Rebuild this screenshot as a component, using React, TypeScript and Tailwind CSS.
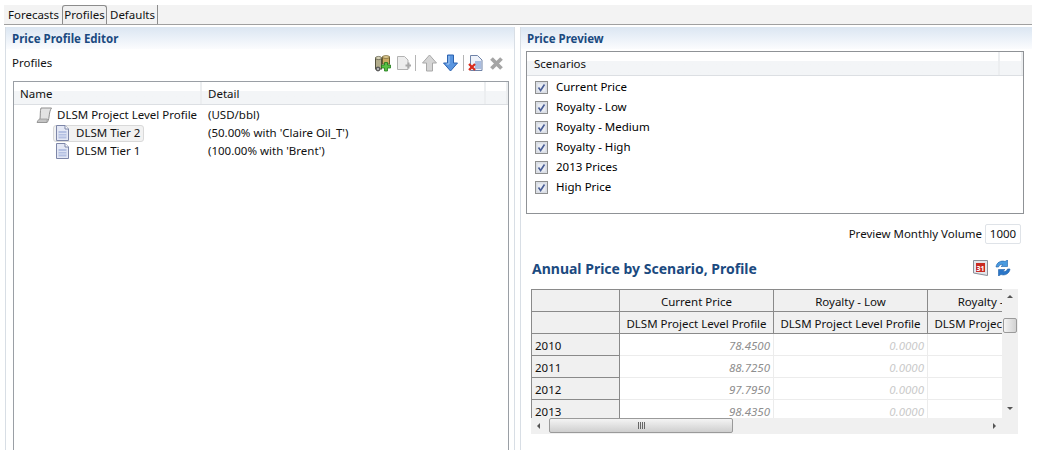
import React from "react";

const font = { fontFamily: '"Noto Sans", "Open Sans", sans-serif' };

function CheckRow({ label }: { label: string }) {
  return (
    <div className="flex h-5 items-center pl-2">
      <svg width="13" height="13" viewBox="0 0 13 13" className="shrink-0">
        <rect x="0.5" y="0.5" width="12" height="12" fill="#dfe3ea" stroke="#8e8f8f" />
        <rect x="2" y="2" width="9" height="9" fill="#e9ecf2" stroke="#c6cbd4" strokeWidth="0.5" />
        <path d="M3.5 6.5 L5.6 9.5 L9.5 3.5" fill="none" stroke="#4a5f97" strokeWidth="1.6" />
      </svg>
      <span className="ml-[8px] text-black">{label}</span>
    </div>
  );
}

function DocIcon() {
  return (
    <svg width="15" height="16" viewBox="0 0 15 16" className="shrink-0">
      <path d="M1.5 0.5 H10 L13.5 4 V15.5 H1.5 Z" fill="#e4e8f5" stroke="#7d86a8" />
      <path d="M10 0.5 V4 H13.5" fill="#fff" stroke="#7d86a8" />
      <rect x="3.5" y="6" width="8" height="7.5" fill="#b4c0e2" />
      <path d="M3.5 8.5 H11.5 M3.5 11 H11.5" stroke="#eef1fa" strokeWidth="0.7" />
    </svg>
  );
}

function ScrollIcon() {
  return (
    <svg width="17" height="17" viewBox="0 0 17 17" className="shrink-0">
      <path d="M5 1 H15.5 C14 3 13.5 6 13 10 C12.8 12 12 14.5 11 15.5 H1 C2.5 14.5 3 13 4 12 C4.5 8 4 4 5 1 Z" fill="#e3e3e3" stroke="#8f8f8f" />
      <path d="M1 15.5 C2 12.5 3 12 4.5 12 H11.5 C11 13 11 14.5 11 15.5 Z" fill="#c4c4c4" stroke="#8f8f8f" strokeWidth="0.7" />
    </svg>
  );
}

function Toolbar() {
  return (
    <div className="flex items-center">
      <svg width="16" height="17" viewBox="0 0 16 17">
        <rect x="0.5" y="3" width="6" height="11" fill="#b3ad8c" stroke="#55533f" />
        <ellipse cx="3.5" cy="3" rx="3" ry="1.6" fill="#d6d2b8" stroke="#55533f" strokeWidth="0.7" />
        <rect x="7.5" y="2" width="7" height="7" fill="#c9ab63" stroke="#6b5c30" />
        <ellipse cx="11" cy="2" rx="3.5" ry="1.4" fill="#e2cf95" stroke="#6b5c30" strokeWidth="0.7" />
        <circle cx="3" cy="14" r="2.4" fill="#5e5e5e" />
        <circle cx="3" cy="14" r="0.9" fill="#ddd" />
        <path d="M9.5 7.5 H12.5 V10 H15.5 V13 H12.5 V16 H9.5 V13 H6.5 V10 H9.5 Z" fill="#58c045" stroke="#1f7a1a" strokeWidth="0.8" />
      </svg>
      <svg width="15" height="16" viewBox="0 0 15 16" className="ml-[5px]">
        <path d="M1.5 1.5 H8.5 L12 5 V14.5 H1.5 Z" fill="#ededed" stroke="#b3b3b3" />
        <path d="M9.5 9.5 H11.5 V7.5 H13.5 V9.5 H15 V11.5 H13.5 V13.5 H11.5 V11.5 H9.5 Z" fill="#a8a8a8" />
      </svg>
      <div className="ml-[4px] h-[16px] w-px bg-[#b5b5b5]" />
      <svg width="15" height="18" viewBox="0 0 15 18" className="ml-[6px]">
        <path d="M7.5 1 L14.5 9 H10.5 V17 H4.5 V9 H0.5 Z" fill="#d5d5d5" stroke="#a8a8a8" />
      </svg>
      <svg width="15" height="18" viewBox="0 0 15 18" className="ml-[6px]">
        <path d="M7.5 17 L14.5 9 H10.5 V1 H4.5 V9 H0.5 Z" fill="#5a96e0" stroke="#2d63b0" />
        <path d="M6 2 V10 H3.5" fill="none" stroke="#a9cbf3" />
      </svg>
      <div className="ml-[5px] h-[16px] w-px bg-[#b5b5b5]" />
      <svg width="15" height="17" viewBox="0 0 15 17" className="ml-[4px]">
        <path d="M2.5 0.5 H9.5 L14 5 V15.5 H2.5 Z" fill="#eef2fa" stroke="#6f83a8" />
        <rect x="7" y="6" width="6" height="8" fill="#a9bde0" />
        <path d="M1 9 L7 15 M7 9 L1 15" stroke="#d92a1c" strokeWidth="2.2" />
      </svg>
      <svg width="15" height="15" viewBox="0 0 15 15" className="ml-[6px]">
        <path d="M2.5 2.5 L12.5 12.5 M12.5 2.5 L2.5 12.5" stroke="#a5a5a5" strokeWidth="3.8" />
      </svg>
    </div>
  );
}

function PanelHeader({ title }: { title: string }) {
  return (
    <div className="flex h-[22px] items-center bg-gradient-to-b from-[#dbe6f2] to-[#fbfcfe] pl-[6px] pt-[1px] text-[11.5px] font-bold text-[#1b4a80]">
      {title}
    </div>
  );
}

const cols = ["w-[88px]", "w-[154px]", "w-[154px]", "w-[154px]"];
const cellBase = "box-border h-[22px] shrink-0 overflow-hidden whitespace-nowrap leading-[23px]";
const head = `${cellBase} border-b border-r border-[#8a8a8a] bg-[#f0f0f0] text-center`;

function HeadRow({ labels }: { labels: string[] }) {
  return (
    <div className="flex">
      {labels.map((l, i) => (
        <div key={i} className={`${head} ${cols[i]}`}>
          {l}
        </div>
      ))}
    </div>
  );
}

function DataRow({ year, value }: { year: string; value: string }) {
  return (
    <div className="flex">
      <div className={`${cellBase} ${cols[0]} border-b border-r border-[#8a8a8a] bg-[#f0f0f0] pl-[3px] text-left`}>{year}</div>
      <div className={`${cellBase} ${cols[1]} border-b border-r border-[#ececec] pr-[3px] text-right italic text-[#8d8d8d]`}>{value}</div>
      <div className={`${cellBase} ${cols[2]} border-b border-r border-[#ececec] pr-[3px] text-right italic text-[#c9c9c9]`}>0.0000</div>
      <div className={`${cellBase} ${cols[3]} border-b border-[#ececec]`} />
    </div>
  );
}

function ColumnHeader({ labels, widths, tall }: { labels: string[]; widths: string[]; tall?: boolean }) {
  return (
    <div className={`flex ${tall ? "h-[24px]" : "h-[23px]"} border-b border-[#dcdfe3] bg-gradient-to-b from-white from-40% to-[#f3f5f7] to-40%`}>
      {labels.map((l, i) => (
        <div key={i} className={`${widths[i]} flex items-center border-r-2 border-[#eceef0] ${tall ? "pl-[7px]" : "pl-[6px]"} pt-[1px]`}>
          {l}
        </div>
      ))}
    </div>
  );
}

export default function App() {
  return (
    <div className="h-[452px] w-[1037px] overflow-hidden bg-white text-[11.5px] text-[#111]" style={font}>
      <div className="h-[5px]" />
      <div className="ml-[4px] mr-[5px] flex h-[19px] items-end bg-[#f3f3f3]">
        <div className="flex h-[19px] w-[58px] items-center justify-center pl-[1px]">Forecasts</div>
        <div className="flex h-[19px] w-[45px] items-center justify-center rounded-t-[3px] border border-b-0 border-[#8c8c8c] bg-[#f0f0f0]">Profiles</div>
        <div className="flex h-[19px] w-[51px] items-center justify-center border-r border-[#8c8c8c] pl-[1px]">Defaults</div>
      </div>
      <div className="ml-[4px] mr-[5px] h-px bg-[#a0a0a0]" />
      <div className="mt-[2px] ml-[5px] mr-[5px] flex h-[423px] gap-[5px]">
        <div className="flex w-[510px] flex-col border-l border-r border-[#d8dee5]">
          <PanelHeader title="Price Profile Editor" />
          <div className="flex h-[28px] items-center justify-between pl-[6px] pr-[10px]">
            <span>Profiles</span>
            <Toolbar />
          </div>
          <div className="ml-[7px] mr-[5px] mt-[4px] flex-1 border border-b-0 border-[#9a9fa5] bg-white">
            <ColumnHeader labels={["Name", "Detail", ""]} widths={["w-[188px]", "w-[284px]", "flex-1"]} />
            <div className="mt-[1px] flex h-[18px] items-center">
              <div className="flex w-[188px] items-center pl-[22px]">
                <ScrollIcon />
                <span className="ml-[4px] whitespace-nowrap">DLSM Project Level Profile</span>
              </div>
              <span className="pl-[6px]">(USD/bbl)</span>
            </div>
            <div className="flex h-[18px] items-center">
              <div className="flex w-[188px] items-center pl-[39px]">
                <div className="flex h-[17px] items-center rounded-[3px] border border-[#d9d9d9] bg-[#f2f2f2] pl-[1px] pr-[3px]">
                  <DocIcon />
                  <span className="ml-[6px] whitespace-nowrap">DLSM Tier 2</span>
                </div>
              </div>
              <span className="pl-[6px]">(50.00% with 'Claire Oil_T')</span>
            </div>
            <div className="flex h-[17px] items-center">
              <div className="flex w-[188px] items-center pl-[41px]">
                <DocIcon />
                <span className="ml-[6px] whitespace-nowrap">DLSM Tier 1</span>
              </div>
              <span className="pl-[6px]">(100.00% with 'Brent')</span>
            </div>
          </div>
        </div>
        <div className="flex w-[512px] flex-col border-l border-[#d8dee5]">
          <PanelHeader title="Price Preview" />
          <div className="ml-[5px] mr-[8px] mt-[2px] h-[163px] border border-[#8f9296] bg-white">
            <ColumnHeader tall labels={["Scenarios", ""]} widths={["w-[473px]", "flex-1"]} />
            <div className="mt-[1px]">
              {["Current Price", "Royalty - Low", "Royalty - Medium", "Royalty - High", "2013 Prices", "High Price"].map((s) => (
                <CheckRow key={s} label={s} />
              ))}
            </div>
          </div>
          <div className="mt-[9px] flex h-[22px] items-center justify-end pr-[11px]">
            <span>Preview Monthly Volume</span>
            <div className="ml-[3px] flex h-[20px] w-[36px] items-center justify-center rounded-[2px] border border-[#dfe3e8]">1000</div>
          </div>
          <div className="ml-[11px] mr-[21px] mt-[11px] flex h-[24px] items-center justify-between">
            <span className="text-[14px] font-bold text-[#1b4a80]">Annual Price by Scenario, Profile</span>
            <div className="flex items-center gap-[7px]">
              <svg width="15" height="16" viewBox="0 0 15 16">
                <path d="M0.5 0.5 H14.5 V15.5 L0.5 13 Z" fill="#e3e5ea" stroke="#8a8f99" />
                <rect x="3" y="3" width="9" height="9" fill="#c92a22" />
                <text x="7.5" y="10.5" fontSize="7" fontWeight="700" fill="#fff" textAnchor="middle">31</text>
              </svg>
              <svg width="16" height="16" viewBox="0 0 16 16">
                <path d="M1 7 C1.5 2.5 6 0 10 1.5 L12.5 0 V6.5 H6 L8 4.7 C6 4 4 5 3.5 7 Z" fill="#4a9be0" stroke="#1f5fa8" strokeWidth="0.6" />
                <path d="M15 9 C14.5 13.5 10 16 6 14.5 L3.5 16 V9.5 H10 L8 11.3 C10 12 12 11 12.5 9 Z" fill="#2a76c8" stroke="#1f5fa8" strokeWidth="0.6" />
              </svg>
            </div>
          </div>
          <div className="ml-[10px] mt-[9px] w-[487px]">
            <div className="flex h-[129px]">
              <div className="w-[471px] overflow-hidden border-t border-l border-[#8a8a8a]">
                <HeadRow labels={["", "Current Price", "Royalty - Low", "Royalty - Medium"]} />
                <HeadRow labels={["", "DLSM Project Level Profile", "DLSM Project Level Profile", "DLSM Project Level Profile"]} />
                <DataRow year="2010" value="78.4500" />
                <DataRow year="2011" value="88.7250" />
                <DataRow year="2012" value="97.7950" />
                <DataRow year="2013" value="98.4350" />
              </div>
              <div className="relative w-[16px] bg-[#f0f0f0]">
                <svg width="16" height="129" viewBox="0 0 16 129" className="absolute inset-0">
                  <path d="M5 9 L8 6 L11 9 Z" fill="#555" />
                  <path d="M5 118 L8 121 L11 118 Z" fill="#555" />
                </svg>
                <div className="absolute left-[1px] top-[29px] h-[15px] w-[14px] rounded-[2px] border border-[#9a9a9a] bg-gradient-to-r from-[#f4f4f4] to-[#d2d2d2]" />
              </div>
            </div>
            <div className="relative h-[16px] w-[487px] bg-[#f0f0f0]">
              <svg width="487" height="16" viewBox="0 0 487 16" className="absolute inset-0">
                <path d="M9 5 L6 8 L9 11 Z" fill="#555" />
                <path d="M462 5 L465 8 L462 11 Z" fill="#555" />
              </svg>
              <div className="absolute left-[18px] top-0 flex h-[15px] w-[184px] items-center justify-center rounded-[2px] border border-[#9a9a9a] bg-gradient-to-b from-[#f4f4f4] to-[#cfcfcf]">
                <div className="flex gap-[1px]">
                  <div className="h-[7px] w-px bg-[#666]" />
                  <div className="h-[7px] w-px bg-[#666]" />
                  <div className="h-[7px] w-px bg-[#666]" />
                  <div className="h-[7px] w-px bg-[#666]" />
                </div>
              </div>
            </div>
          </div>
        </div>
      </div>
    </div>
  );
}
